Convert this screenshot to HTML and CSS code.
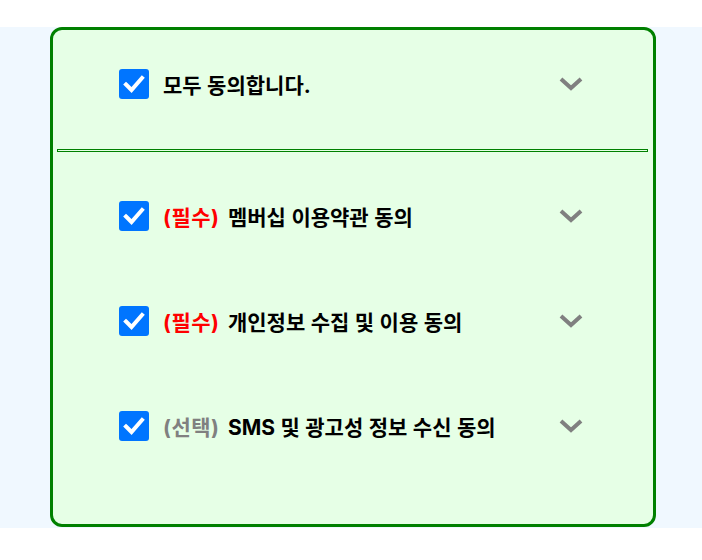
FILE: index.html
```html
<!DOCTYPE html>
<html lang="ko">
<head>
<meta charset="utf-8">
<link rel="stylesheet" href="styles.css">
</head>
<body>
<div class="band">
  <div class="card">
    <div class="row row-all">
      <div class="left">
        <span class="box"><svg width="30" height="30" viewBox="0 0 30 30"><path d="M7 15.5 L12.5 21 L23 9" fill="none" stroke="#fff" stroke-width="4" stroke-linecap="square" stroke-linejoin="miter"/></svg></span>
        <span class="label">모두 동의합니다.</span>
      </div>
      <svg class="chev" width="24" height="14" viewBox="0 0 24 14"><path d="M2 2 L12 11 L22 2" fill="none" stroke="#808080" stroke-width="4"/></svg>
    </div>
    <hr class="divider">
    <div class="list">
      <div class="row">
        <div class="left">
          <span class="box"><svg width="30" height="30" viewBox="0 0 30 30"><path d="M7 15.5 L12.5 21 L23 9" fill="none" stroke="#fff" stroke-width="4" stroke-linecap="square"/></svg></span>
          <span class="label"><span class="req">(필수)</span> 멤버십 이용약관 동의</span>
        </div>
        <svg class="chev" width="24" height="14" viewBox="0 0 24 14"><path d="M2 2 L12 11 L22 2" fill="none" stroke="#808080" stroke-width="4"/></svg>
      </div>
      <div class="row">
        <div class="left">
          <span class="box"><svg width="30" height="30" viewBox="0 0 30 30"><path d="M7 15.5 L12.5 21 L23 9" fill="none" stroke="#fff" stroke-width="4" stroke-linecap="square"/></svg></span>
          <span class="label"><span class="req">(필수)</span> 개인정보 수집 및 이용 동의</span>
        </div>
        <svg class="chev" width="24" height="14" viewBox="0 0 24 14"><path d="M2 2 L12 11 L22 2" fill="none" stroke="#808080" stroke-width="4"/></svg>
      </div>
      <div class="row">
        <div class="left">
          <span class="box"><svg width="30" height="30" viewBox="0 0 30 30"><path d="M7 15.5 L12.5 21 L23 9" fill="none" stroke="#fff" stroke-width="4" stroke-linecap="square"/></svg></span>
          <span class="label"><span class="opt">(선택)</span> SMS 및 광고성 정보 수신 동의</span>
        </div>
        <svg class="chev" width="24" height="14" viewBox="0 0 24 14"><path d="M2 2 L12 11 L22 2" fill="none" stroke="#808080" stroke-width="4"/></svg>
      </div>
    </div>
  </div>
</div>
</body>
</html>
```
FILE: styles.css
```css
html, body {
  margin: 0;
  padding: 0;
  background: #ffffff;
}
body {
  padding-top: 27px;
  font-family: "Inter", "Noto Sans CJK KR", sans-serif;
}
.band {
  background: #f0f8ff;
  height: 501px;
}
.card {
  box-sizing: border-box;
  margin-left: 50px;
  width: 606px;
  height: 500px;
  border: 3px solid #008000;
  border-radius: 12px;
  background: #e6ffe6;
  padding-top: 39px;
}
.row {
  display: flex;
  align-items: center;
  justify-content: space-between;
  margin-left: 66px;
  width: 464px;
  height: 30px;
}
.left {
  display: flex;
  align-items: center;
  gap: 14px;
}
.box {
  display: block;
  width: 30px;
  height: 30px;
  border-radius: 3px;
  background: #0075ff;
}
.box svg { display: block; }
.label {
  font-size: 21px;
  font-weight: 700;
  color: #000;
  white-space: nowrap;
  word-spacing: 0.5px;
}
.req, .opt {
  display: inline-block;
  margin-right: 3px;
  letter-spacing: 0.5px;
}
.req { color: #ff0000; }
.opt { color: #808080; }
.chev { display: block; }
.divider {
  box-sizing: border-box;
  margin: 50px 0 0 4px;
  width: 591px;
  height: 3px;
  border: 1px solid #008000;
  background: transparent;
}
.list {
  display: flex;
  flex-direction: column;
  gap: 75px;
  margin-top: 49px;
}
```
